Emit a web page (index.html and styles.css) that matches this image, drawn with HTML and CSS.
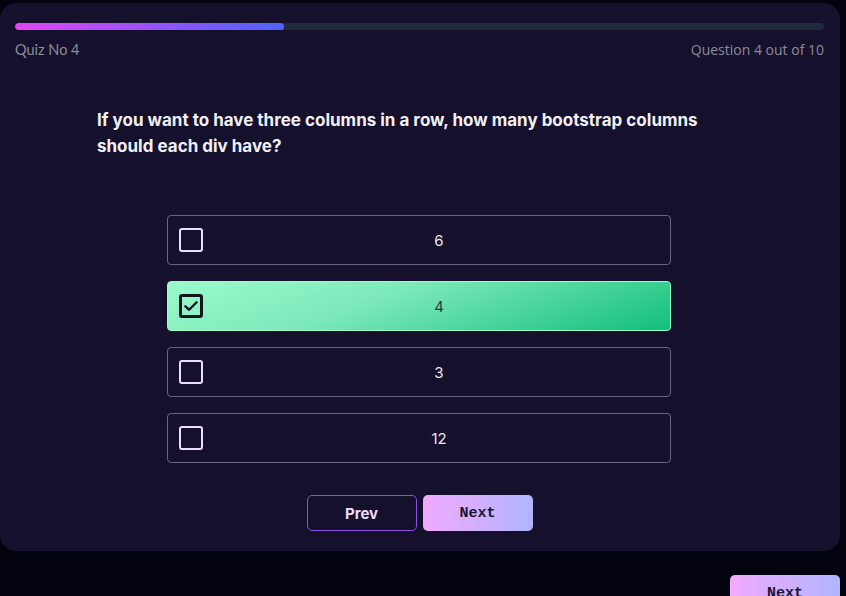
FILE: index.html
```html
<!DOCTYPE html>
<html>
<head>
<meta charset="utf-8">
<link rel="stylesheet" href="styles.css">
</head>
<body>
<div class="card">
  <div class="progress"><div class="fill"></div></div>
  <div class="meta">
    <span class="quizno">Quiz No 4</span>
    <span class="qcount">Question 4 out of 10</span>
  </div>
  <p class="question">If you want to have three columns in a row, how many bootstrap columns should each div have?</p>
  <div class="options">
    <div class="option"><span class="box"></span><span class="label">6</span></div>
    <div class="option selected"><span class="box"><svg viewBox="0 0 24 24" width="18" height="18"><path d="M4.5 12.5l5 4.5L19.5 7" fill="none" stroke="#14141f" stroke-width="3.2" stroke-linecap="round" stroke-linejoin="round"/></svg></span><span class="label">4</span></div>
    <div class="option"><span class="box"></span><span class="label">3</span></div>
    <div class="option"><span class="box"></span><span class="label">12</span></div>
  </div>
  <div class="nav">
    <button class="btn prev">Prev</button>
    <button class="btn next">Next</button>
  </div>
</div>
<div class="footer">
  <button class="btn next outer">Next</button>
</div>
</body>
</html>
```
FILE: styles.css
```css
html, body {
  margin: 0;
  padding: 0;
  background: #03030f;
}
body {
  padding-top: 3px;
  font-family: "Lato", "Noto Sans", sans-serif;
}
.card {
  width: 840px;
  height: 548px;
  box-sizing: border-box;
  background: #15102b;
  border-radius: 16px;
  padding: 20px 16px 0 15px;
}
.progress {
  height: 7px;
  border-radius: 4px;
  background: #1f2a3c;
  overflow: hidden;
}
.fill {
  width: 269px;
  height: 100%;
  border-radius: 4px;
  background: linear-gradient(90deg, #e244f5, #4f62ff);
}
.meta {
  display: flex;
  justify-content: space-between;
  margin-top: 10px;
  font-size: 14.5px;
  color: #8e8b9c;
  line-height: 20px;
}
.qcount {
  font-family: "Open Sans", sans-serif;
  font-size: 14px;
  letter-spacing: 0;
}
.question {
  margin: 47px 0 0 82px;
  width: 640px;
  font-family: "Inter", sans-serif;
  font-weight: 700;
  font-size: 17px;
  line-height: 26px;
  color: #f1eff6;
}
.options {
  display: flex;
  flex-direction: column;
  gap: 16px;
  margin: 56px 0 0 152px;
  width: 504px;
}
.option {
  height: 50px;
  box-sizing: border-box;
  border: 1px solid #6a6580;
  border-radius: 4px;
  display: flex;
  align-items: center;
  padding-left: 11px;
  color: #e9e6f2;
  font-family: "Inter", sans-serif;
  font-size: 15px;
}
.option.selected {
  background: linear-gradient(160deg, #9afbcb 0%, #7de9bb 40%, #12bf7b 100%);
  border-color: #9afbcb;
  color: #2a3a35;
}
.box {
  width: 24px;
  height: 24px;
  flex: none;
  box-sizing: border-box;
  border: 2.5px solid #ecdcff;
  border-radius: 3px;
  display: flex;
  align-items: center;
  justify-content: center;
}
.selected .box {
  border-color: #14141f;
  border-width: 3px;
}
.label {
  flex: 1;
  text-align: center;
  padding-left: 5px;
}
.nav {
  display: flex;
  justify-content: center;
  gap: 6px;
  margin-top: 32px;
}
.btn {
  width: 110px;
  height: 36px;
  box-sizing: border-box;
  border-radius: 5px;
  font-size: 15px;
  font-weight: 700;
  cursor: pointer;
}
.prev {
  background: transparent;
  border: 1px solid #8b4fe6;
  color: #ecdcff;
  font-family: "Inter", sans-serif;
}
.next {
  border: none;
  background: linear-gradient(90deg, #f2aafd, #b0b4ff);
  color: #1a1530;
  font-family: "Liberation Mono", monospace;
  font-size: 15px;
}
.footer {
  display: flex;
  justify-content: flex-end;
  padding: 24px 6px 0 0;
}
```
